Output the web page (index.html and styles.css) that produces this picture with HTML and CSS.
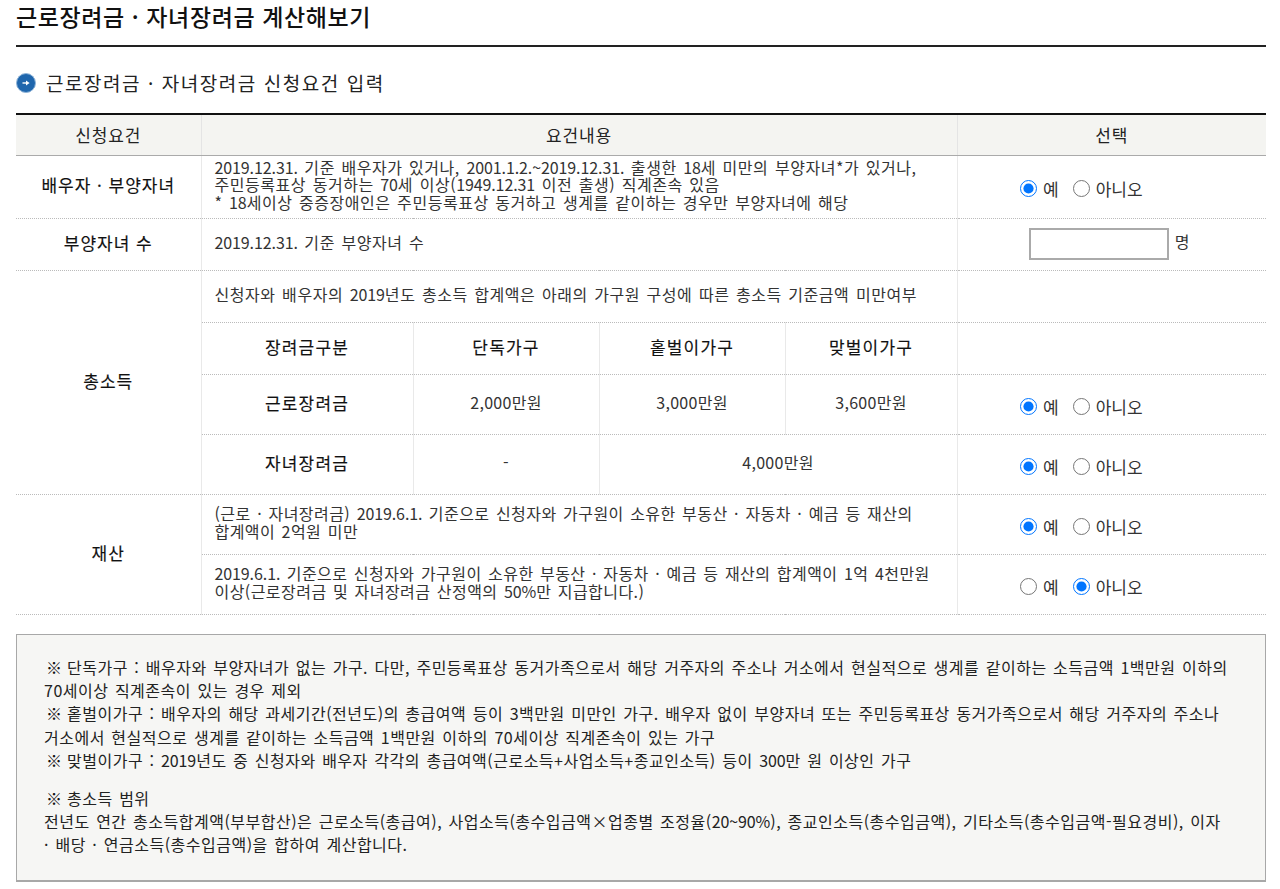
FILE: index.html
```html
<!DOCTYPE html>
<html lang="ko">
<head>
<meta charset="utf-8">
<title>근로장려금 · 자녀장려금 계산해보기</title>
<link rel="stylesheet" href="styles.css">
</head>
<body>
<div class="page">
  <h1 class="page-title">근로장려금 · 자녀장려금 계산해보기</h1>
  <h2 class="section-title">
    <svg class="bullet" width="20" height="20" viewBox="0 0 20 20" aria-hidden="true">
      <circle cx="10" cy="10" r="9.5" fill="#1f66ad"/>
      <circle cx="10" cy="10" r="9.5" fill="none" stroke="#8fb4d8" stroke-width="1"/>
      <path d="M6.5 10h4" fill="none" stroke="#fff" stroke-width="1.4"/>
      <path d="M10 7.6 13.6 10 10 12.4z" fill="#fff"/>
    </svg>
    근로장려금 · 자녀장려금 신청요건 입력
  </h2>
  <table class="req">
    <colgroup>
      <col class="c1"><col class="c2"><col class="c3"><col class="c4"><col class="c5"><col class="c6">
    </colgroup>
    <thead>
      <tr class="h-head"><th>신청요건</th><th colspan="4">요건내용</th><th>선택</th></tr>
    </thead>
    <tbody>
      <tr class="h-62">
        <th>배우자 · 부양자녀</th>
        <td colspan="4" class="left"><span class="d">2019.12.31.</span> 기준 배우자가 있거나, <span class="d">2001.1.2.~2019.12.31.</span> 출생한 <span class="d">18</span>세 미만의 부양자녀*가 있거나,<br>주민등록표상 동거하는 <span class="d">70</span>세 이상(<span class="d">1949.12.31</span> 이전 출생) 직계존속 있음<br>* <span class="d">18</span>세이상 중증장애인은 주민등록표상 동거하고 생계를 같이하는 경우만 부양자녀에 해당</td>
        <td class="choice"><label class="opt"><input type="radio" name="a" checked>예</label><label class="opt"><input type="radio" name="a">아니오</label></td>
      </tr>
      <tr class="h-52">
        <th>부양자녀 수</th>
        <td colspan="4" class="left"><span class="d">2019.12.31.</span> 기준 부양자녀 수</td>
        <td class="count"><input type="text" class="num">명</td>
      </tr>
      <tr class="h-52">
        <th rowspan="4">총소득</th>
        <td colspan="4" class="left">신청자와 배우자의 <span class="d">2019</span>년도 총소득 합계액은 아래의 가구원 구성에 따른 총소득 기준금액 미만여부</td>
        <td></td>
      </tr>
      <tr class="h-52">
        <th class="sub">장려금구분</th><th class="sub">단독가구</th><th class="sub">홑벌이가구</th><th class="sub">맞벌이가구</th>
        <td></td>
      </tr>
      <tr class="h-60">
        <th class="sub">근로장려금</th><td>2,000만원</td><td>3,000만원</td><td>3,600만원</td>
        <td class="choice"><label class="opt"><input type="radio" name="b" checked>예</label><label class="opt"><input type="radio" name="b">아니오</label></td>
      </tr>
      <tr class="h-60">
        <th class="sub">자녀장려금</th><td>-</td><td colspan="2">4,000만원</td>
        <td class="choice"><label class="opt"><input type="radio" name="c" checked>예</label><label class="opt"><input type="radio" name="c">아니오</label></td>
      </tr>
      <tr class="h-60">
        <th rowspan="2">재산</th>
        <td colspan="4" class="left narrow">(근로 · 자녀장려금) <span class="d">2019.6.1.</span> 기준으로 신청자와 가구원이 소유한 부동산 · 자동차 · 예금 등 재산의<br>합계액이 2억원 미만</td>
        <td class="choice"><label class="opt"><input type="radio" name="d" checked>예</label><label class="opt"><input type="radio" name="d">아니오</label></td>
      </tr>
      <tr class="h-60">
        <td colspan="4" class="left narrow"><span class="d">2019.6.1.</span> 기준으로 신청자와 가구원이 소유한 부동산 · 자동차 · 예금 등 재산의 합계액이 1억 4천만원<br>이상(근로장려금 및 자녀장려금 산정액의 <span class="d">50%</span>만 지급합니다.)</td>
        <td class="choice"><label class="opt"><input type="radio" name="e">예</label><label class="opt"><input type="radio" name="e" checked>아니오</label></td>
      </tr>
    </tbody>
  </table>
  <div class="notes">
    <p><span class="mark">※</span> 단독가구 : 배우자와 부양자녀가 없는 가구. 다만, 주민등록표상 동거가족으로서 해당 거주자의 주소나 거소에서 현실적으로 생계를 같이하는 소득금액 1백만원 이하의<br>
    70세이상 직계존속이 있는 경우 제외<br>
    <span class="mark">※</span> 홑벌이가구 : 배우자의 해당 과세기간(전년도)의 총급여액 등이 3백만원 미만인 가구. 배우자 없이 부양자녀 또는 주민등록표상 동거가족으로서 해당 거주자의 주소나<br>
    거소에서 현실적으로 생계를 같이하는 소득금액 1백만원 이하의 70세이상 직계존속이 있는 가구<br>
    <span class="mark">※</span> 맞벌이가구 : <span class="d">2019</span>년도 중 신청자와 배우자 각각의 총급여액(근로소득+사업소득+종교인소득) 등이 <span class="d">300</span>만 원 이상인 가구</p>
    <p><span class="mark">※</span> 총소득 범위<br>
    전년도 연간 총소득합계액(부부합산)은 근로소득(총급여), 사업소득(총수입금액×업종별 조정율(<span class="d">20~90%</span>), 종교인소득(총수입금액), 기타소득(총수입금액-필요경비), 이자<br>
    · 배당 · 연금소득(총수입금액)을 합하여 계산합니다.</p>
  </div>
</div>
</body>
</html>
```
FILE: styles.css
```css
* { box-sizing: border-box; }
html, body { margin: 0; padding: 0; background: #fff; }
body {
  font-family: "Noto Sans CJK KR", "Noto Sans", sans-serif;
  color: #333;
  font-size: 16px;
}
.page { padding: 0 14px 0 16px; height: 889px; overflow: hidden; }
.page-title {
  margin: 0;
  height: 47px;
  border-bottom: 2px solid #222;
  font-size: 23px;
  line-height: 32px;
  font-weight: 500;
  letter-spacing: 0.6px;
  color: #111;
}
.section-title {
  display: flex;
  align-items: center;
  gap: 10px;
  margin: 0;
  height: 66px;
  padding-top: 5px;
  font-size: 19px;
  font-weight: 400;
  color: #222;
  letter-spacing: 1.55px;
}
.bullet { flex: none; }
.req {
  width: 1250px;
  table-layout: fixed;
  border-collapse: collapse;
  border-top: 2px solid #111;
}
.c1 { width: 185px; }
.c2 { width: 212px; }
.c3 { width: 186px; }
.c4 { width: 186px; }
.c5 { width: 172px; }
.c6 { width: 309px; }
.req th, .req td {
  padding: 0 0 3px;
  text-align: center;
  vertical-align: middle;
  border-bottom: 1px dotted #bbb;
  border-right: 1px solid #e9e9e9;
  line-height: 17.6px;
  font-size: 16px;
  letter-spacing: 0.3px;
  word-spacing: 1.5px;
}
.req th { font-size: 17px; font-weight: 400; color: #111; letter-spacing: 1px; word-spacing: 0; -webkit-text-stroke: 0.15px #111; }
.req th.sub { letter-spacing: 1.2px; }
.req tr > :last-child { border-right: 0; }
.req thead th {
  height: 41px;
  padding: 1px 0 0;
  background: #f4f4f1;
  -webkit-text-stroke: 0;
  color: #222;
  letter-spacing: 0.9px;
  border-bottom: 1px solid #aaa;
  border-right-color: #e4e4e4;
}
.req tbody > tr > th[rowspan] { border-right: 1px solid #e9e9e9; }
.h-62 { height: 63px; }
.h-52 { height: 52px; }
.h-60 { height: 60px; }
.req td.left { text-align: left; padding: 0 6px 3px 13px; letter-spacing: 0.55px; }
.req td.narrow { letter-spacing: 0.45px; }
.d { letter-spacing: -0.1px; }
.req td.choice { white-space: nowrap; padding: 7px 61px 0 0; letter-spacing: 0; word-spacing: 0; }
.opt { display: inline-flex; align-items: center; margin-right: 14px; font-size: 17px; color: #333; }
.opt:last-child { margin-right: 0; }
.opt input { width: 17px; height: 17px; margin: 0 6px 0 0; flex: none; }
.req td.count { text-align: center; padding: 0 5px 0 0; }
.num {
  width: 140px;
  height: 32px;
  margin: 0 6px 0 0;
  border: 2px solid #aaa;
  background: #fff;
  vertical-align: middle;
}
.notes {
  margin-top: 19px;
  height: 248px;
  padding: 21px 0 0 27px;
  background: #f6f6f4;
  border: 1px solid #a8a8a8;
  border-bottom-width: 2px;
  font-size: 16px;
  line-height: 23.4px;
  letter-spacing: 0.5px;
  word-spacing: 1.5px;
  color: #222;
  white-space: nowrap;
}
.notes p { margin: 0 0 14px; }
.mark { font-weight: 700; margin: 0 -2px 0 2px; color: #111; }
```
